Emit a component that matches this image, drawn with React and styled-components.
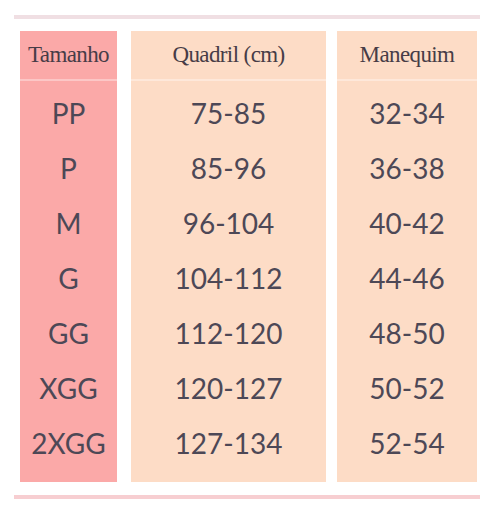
import React from 'react';
import styled, { createGlobalStyle } from 'styled-components';

const GlobalStyle = createGlobalStyle`
  body {
    margin: 0;
    background: #ffffff;
  }
`;

const Page = styled.div`
  width: 501px;
  height: 510px;
  padding-top: 15px;
  box-sizing: border-box;
  display: flex;
  flex-direction: column;
`;

const Rule = styled.div`
  margin-left: 14px;
  width: 466px;
  height: 4px;
  background: ${(p) => p.color};
`;

const Table = styled.div`
  display: flex;
  margin: 12px 0 13px 20px;
  height: 451px;
`;

const Column = styled.div`
  width: ${(p) => p.width}px;
  margin-right: ${(p) => p.gap}px;
  background: ${(p) => p.bg};
  display: flex;
  flex-direction: column;
`;

const Header = styled.div`
  height: 48px;
  display: flex;
  align-items: center;
  justify-content: center;
  font-family: 'Liberation Serif', serif;
  font-size: 23px;
  letter-spacing: -0.6px;
  color: #473c47;
  border-bottom: 2px solid rgba(255, 255, 255, 0.35);
`;

const Body = styled.div`
  padding-top: 4px;
  display: flex;
  flex-direction: column;
`;

const Cell = styled.div`
  height: 55px;
  display: flex;
  align-items: center;
  justify-content: center;
  font-family: Lato, 'Liberation Sans', sans-serif;
  font-size: 28px;
  color: #4d4856;
`;

const columns = [
  {
    title: 'Tamanho',
    width: 97,
    gap: 14,
    bg: '#fba9a8',
    values: ['PP', 'P', 'M', 'G', 'GG', 'XGG', '2XGG'],
  },
  {
    title: 'Quadril (cm)',
    width: 195,
    gap: 11,
    bg: '#fddcc6',
    values: ['75-85', '85-96', '96-104', '104-112', '112-120', '120-127', '127-134'],
  },
  {
    title: 'Manequim',
    width: 140,
    gap: 0,
    bg: '#fddcc6',
    values: ['32-34', '36-38', '40-42', '44-46', '48-50', '50-52', '52-54'],
  },
];

export default function App() {
  return (
    <Page>
      <GlobalStyle />
      <Rule color="#f0dfe3" />
      <Table>
        {columns.map((col) => (
          <Column key={col.title} width={col.width} gap={col.gap} bg={col.bg}>
            <Header>{col.title}</Header>
            <Body>
              {col.values.map((v) => (
                <Cell key={v}>{v}</Cell>
              ))}
            </Body>
          </Column>
        ))}
      </Table>
      <Rule color="#f7ced1" />
    </Page>
  );
}
